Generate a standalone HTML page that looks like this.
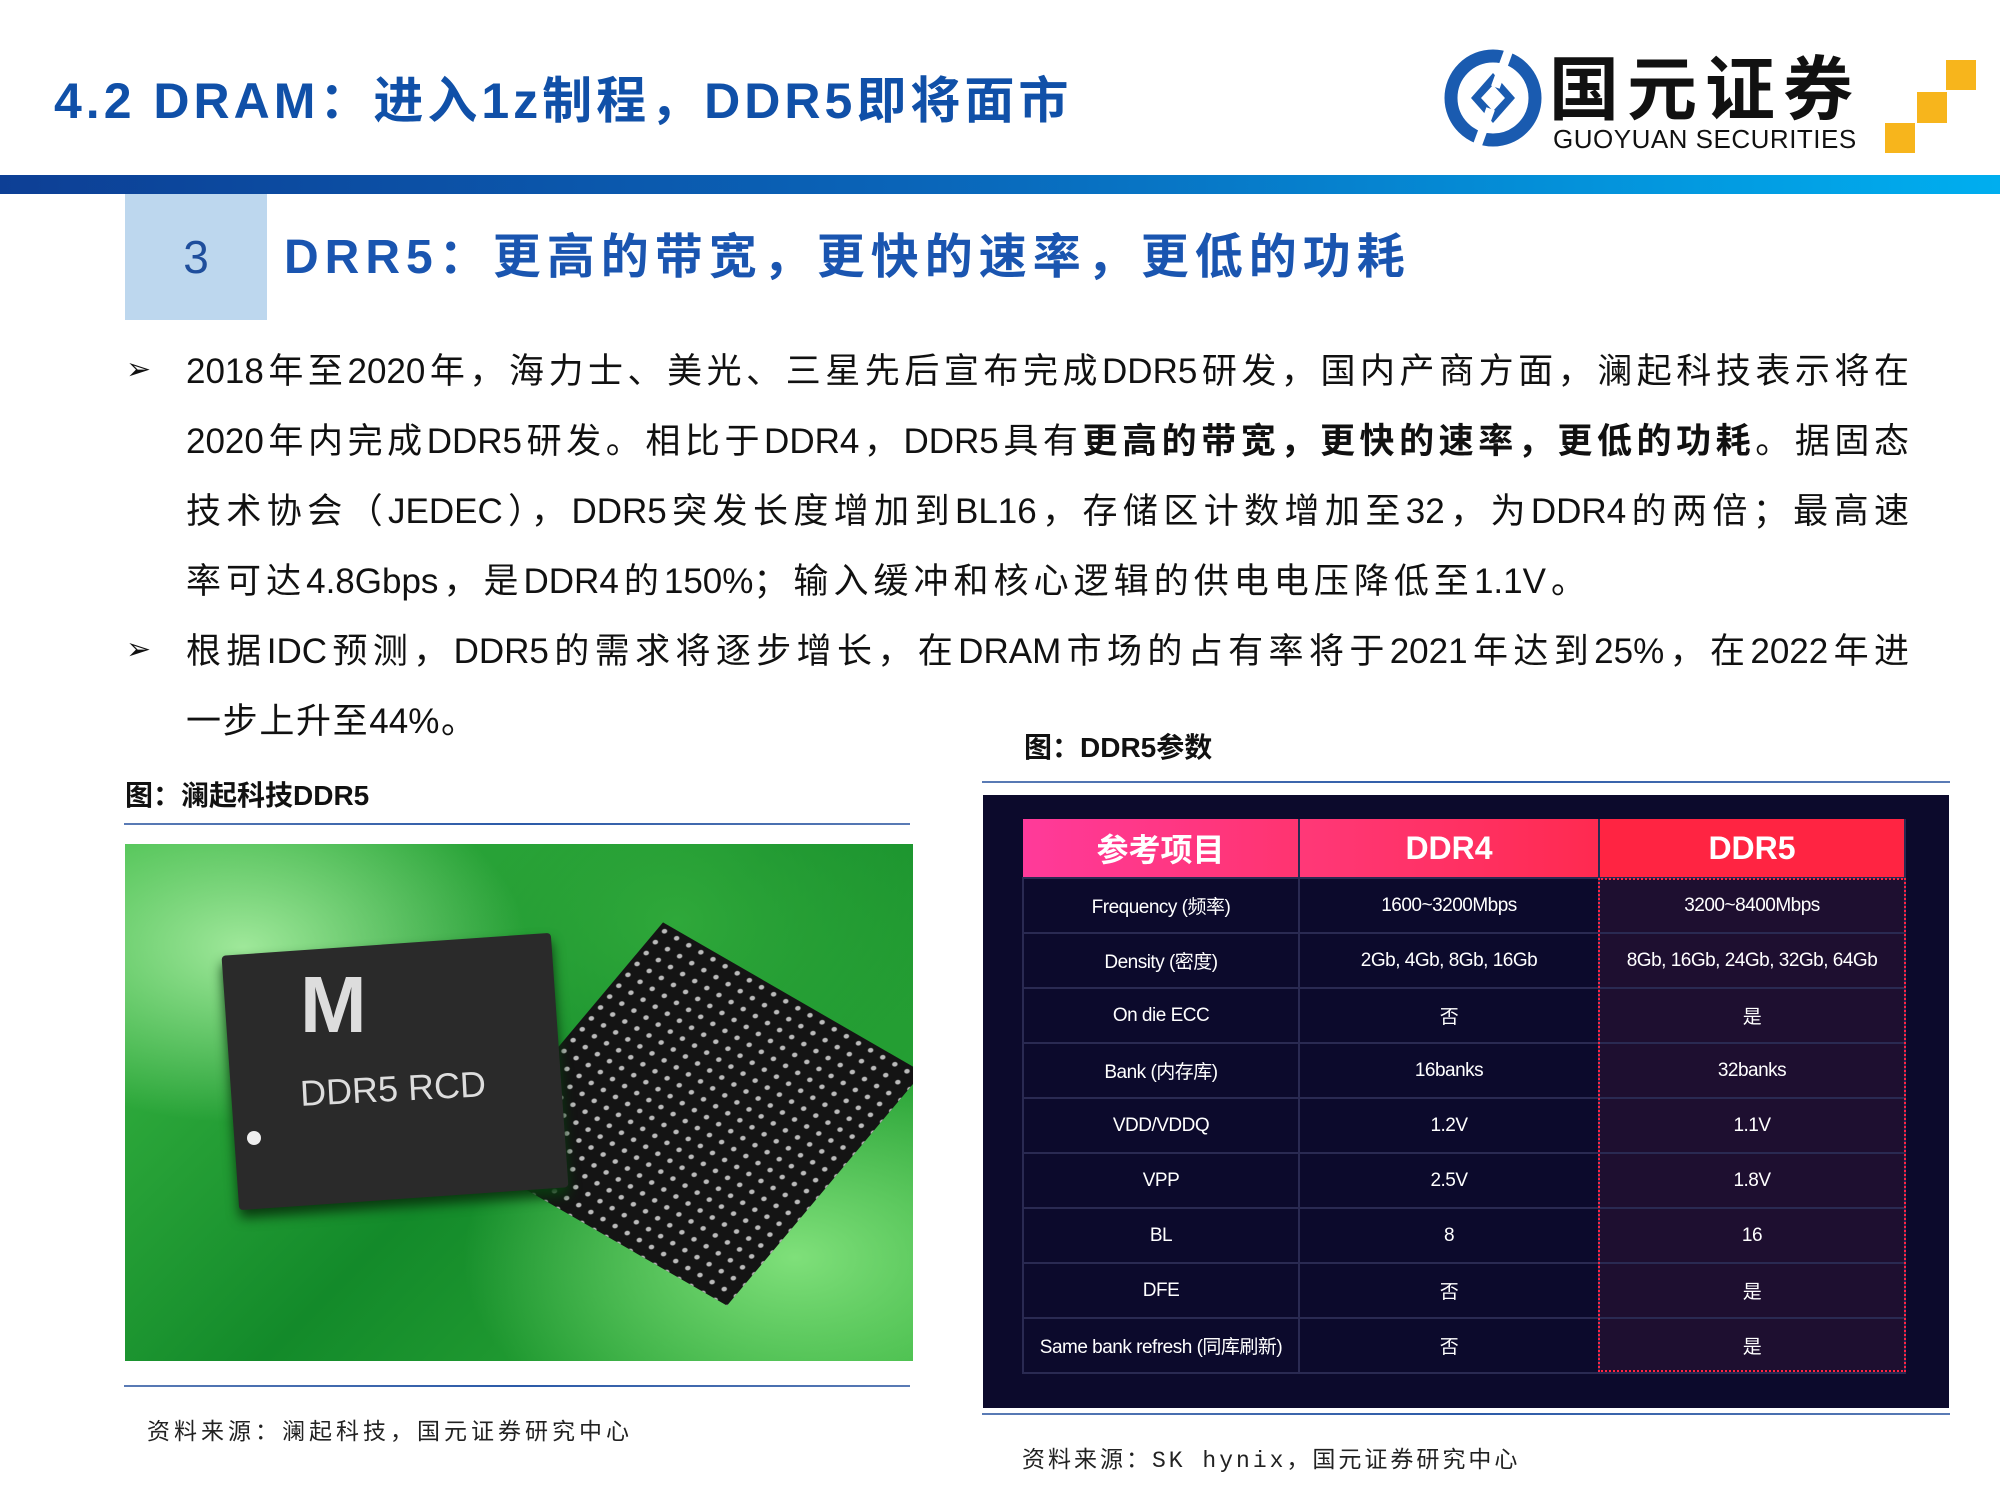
<!DOCTYPE html>
<html><head><meta charset="utf-8"><style>
*{margin:0;padding:0;box-sizing:border-box}
body{width:2000px;height:1500px;background:#fff;position:relative;overflow:hidden;font-family:"Liberation Sans","Noto Sans CJK SC",sans-serif}
.a{position:absolute}
.title{left:54px;top:61px;font-size:50px;font-weight:bold;color:#1050a8;white-space:nowrap;letter-spacing:4px}
.bar{left:0;top:175px;width:2000px;height:19px;background:linear-gradient(90deg,#0d3f95,#0a64b8 45%,#00aeef)}
.box3{left:125px;top:194px;width:142px;height:126px;background:#bdd7ee;color:#1f4e9c;font-size:46px;text-align:center;line-height:126px}
.h2{left:284px;top:217px;font-size:48px;font-weight:bold;color:#1a55b0;white-space:nowrap;letter-spacing:6px}
.ln{left:186px;width:1723px;font-size:35px;color:#111;text-align:justify;text-align-last:justify;white-space:nowrap;height:50px;line-height:50px}
.arr{left:126px;font-size:30px;color:#111}
.cap{font-size:28px;font-weight:bold;color:#111;white-space:nowrap}
.hr{height:2px;background:linear-gradient(90deg,#5a7bb5,#2b5aa8,#5a7bb5)}
.src{font-size:23px;color:#222;font-family:"Liberation Mono","Noto Sans CJK SC",monospace;white-space:nowrap;letter-spacing:4px}
table{border-collapse:collapse;position:absolute;left:1022px;top:819px;width:884px;color:#fff}
td{border:2px solid #2a2a52;text-align:center;height:55px;font-size:19px;letter-spacing:-0.5px}
th{height:59px;font-size:32px;font-weight:bold;border-right:2px solid #2a2a52}
td.r{background:#1e0f30}
</style></head><body>
<div class="a title">4.2 DRAM：进入1z制程，DDR5即将面市</div>
<svg class="a" style="left:1443px;top:47px" width="100" height="102" viewBox="0 0 100 102">
<circle cx="50" cy="51" r="42" fill="none" stroke="#1a5bb0" stroke-width="13"/>
<path d="M50 26 L72 51 L50 76 L28 51Z" fill="#1a5bb0"/>
<path d="M38 51 L50 38 L62 51 L50 64Z" fill="#fff"/>
<rect x="44" y="0" width="9" height="40" fill="#fff" transform="rotate(20 50 51)"/>
<rect x="47" y="62" width="9" height="40" fill="#fff" transform="rotate(20 50 51)"/>
</svg>
<div class="a" style="left:1549px;top:52px;font-size:70px;font-weight:bold;color:#111;letter-spacing:8px;white-space:nowrap;line-height:76px">国元证券</div>
<div class="a" style="left:1553px;top:124px;font-size:26px;color:#111;white-space:nowrap;letter-spacing:0.5px">GUOYUAN SECURITIES</div>
<div class="a" style="left:1946px;top:60px;width:30px;height:30px;background:#f7b51c"></div>
<div class="a" style="left:1917px;top:92px;width:30px;height:31px;background:#f7b51c"></div>
<div class="a" style="left:1885px;top:123px;width:30px;height:30px;background:#f7b51c"></div>
<div class="a bar"></div>
<div class="a box3">3</div>
<div class="a h2">DRR5：更高的带宽，更快的速率，更低的功耗</div>

<div class="a arr" style="top:352px">➢</div>
<div class="a ln" style="top:347px">2018年至2020年，海力士、美光、三星先后宣布完成DDR5研发，国内产商方面，澜起科技表示将在</div>
<div class="a ln" style="top:417px">2020年内完成DDR5研发。相比于DDR4，DDR5具有<b>更高的带宽，更快的速率，更低的功耗</b>。据固态</div>
<div class="a ln" style="top:487px">技术协会（JEDEC），DDR5突发长度增加到BL16，存储区计数增加至32，为DDR4的两倍；最高速</div>
<div class="a ln" style="top:557px;width:1400px">率可达4.8Gbps，是DDR4的150%；输入缓冲和核心逻辑的供电电压降低至1.1V。</div>
<div class="a arr" style="top:632px">➢</div>
<div class="a ln" style="top:627px">根据IDC预测，DDR5的需求将逐步增长，在DRAM市场的占有率将于2021年达到25%，在2022年进</div>
<div class="a ln" style="top:697px;width:290px">一步上升至44%。</div>

<div class="a cap" style="left:125px;top:774px">图：澜起科技DDR5</div>
<div class="a hr" style="left:124px;top:823px;width:786px"></div>
<div class="a" style="left:125px;top:844px;width:788px;height:517px;overflow:hidden;background:radial-gradient(ellipse at 15% 20%,#9fe89a,transparent 30%),radial-gradient(ellipse at 85% 80%,#7fe07a,transparent 35%),radial-gradient(ellipse at 70% 15%,#2fa83a,transparent 40%),linear-gradient(135deg,#3dbb45,#138a2a 50%,#32b03a)">
 <div class="a" style="left:420px;top:120px;width:300px;height:300px;transform:rotate(30deg) skewX(-10deg);background-image:radial-gradient(#bbb 2px,transparent 3px);background-size:14px 14px;background-color:#141414"></div>
 <div class="a" style="left:105px;top:100px;width:330px;height:255px;background:#2a2a2a;transform:rotate(-4deg);border-radius:4px;box-shadow:0 8px 12px #0a3a10"></div>
 <div class="a" style="left:175px;top:115px;font-size:80px;color:#ddd;font-weight:bold">M</div>
 <div class="a" style="left:175px;top:224px;font-size:36px;color:#ddd;transform:rotate(-3deg);white-space:nowrap">DDR5 RCD</div>
 <div class="a" style="left:122px;top:287px;width:14px;height:14px;border-radius:50%;background:#eee"></div>
</div>
<div class="a hr" style="left:124px;top:1385px;width:786px"></div>
<div class="a src" style="left:147px;top:1412px">资料来源：澜起科技，国元证券研究中心</div>

<div class="a cap" style="left:1024px;top:726px">图：DDR5参数</div>
<div class="a hr" style="left:982px;top:781px;width:968px"></div>
<div class="a" style="left:983px;top:795px;width:966px;height:613px;background:#0c0a2c"></div>
<table>
<tr><th style="width:276px;background:linear-gradient(90deg,#ff3a9a,#ff3470)">参考项目</th><th style="width:300px;background:linear-gradient(90deg,#ff3878,#ff2a50)">DDR4</th><th style="background:#ff2442">DDR5</th></tr>
<tr><td>Frequency (频率)</td><td>1600~3200Mbps</td><td class="r">3200~8400Mbps</td></tr>
<tr><td>Density (密度)</td><td>2Gb, 4Gb, 8Gb, 16Gb</td><td class="r">8Gb, 16Gb, 24Gb, 32Gb, 64Gb</td></tr>
<tr><td>On die ECC</td><td>否</td><td class="r">是</td></tr>
<tr><td>Bank (内存库)</td><td>16banks</td><td class="r">32banks</td></tr>
<tr><td>VDD/VDDQ</td><td>1.2V</td><td class="r">1.1V</td></tr>
<tr><td>VPP</td><td>2.5V</td><td class="r">1.8V</td></tr>
<tr><td>BL</td><td>8</td><td class="r">16</td></tr>
<tr><td>DFE</td><td>否</td><td class="r">是</td></tr>
<tr><td>Same bank refresh (同库刷新)</td><td>否</td><td class="r">是</td></tr>
</table>
<div class="a" style="left:1598px;top:878px;width:308px;height:494px;border:2px dotted #ff2442"></div>
<div class="a hr" style="left:982px;top:1413px;width:968px"></div>
<div class="a src" style="left:1022px;top:1440px;letter-spacing:3px">资料来源：SK hynix，国元证券研究中心</div>
</body></html>
